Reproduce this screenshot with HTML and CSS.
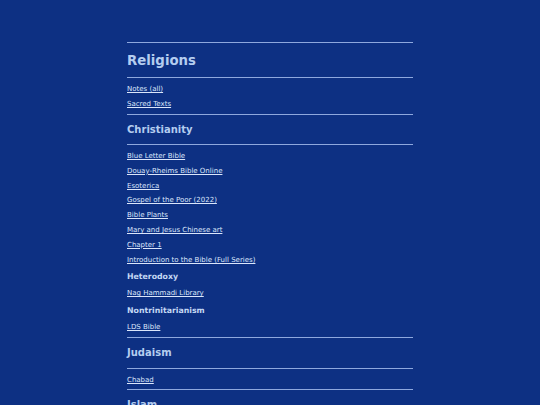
FILE: index.html
```html
<!DOCTYPE html>
<html>
<head>
<meta charset="utf-8">
<link rel="stylesheet" href="styles.css">
</head>
<body>
<main class="page">
  <hr class="rule">
  <h1 class="h1">Religions</h1>
  <hr class="rule">
  <ul class="links">
    <li><a href="#">Notes (all)</a></li>
    <li><a href="#">Sacred Texts</a></li>
  </ul>
  <hr class="rule">
  <h2 class="h2">Christianity</h2>
  <hr class="rule">
  <ul class="links">
    <li><a href="#">Blue Letter Bible</a></li>
    <li><a href="#">Douay-Rheims Bible Online</a></li>
    <li><a href="#">Esoterica</a></li>
    <li><a href="#">Gospel of the Poor (2022)</a></li>
    <li><a href="#">Bible Plants</a></li>
    <li><a href="#">Mary and Jesus Chinese art</a></li>
    <li><a href="#">Chapter 1</a></li>
    <li><a href="#">Introduction to the Bible (Full Series)</a></li>
  </ul>
  <h3 class="h3">Heterodoxy</h3>
  <ul class="links">
    <li><a href="#">Nag Hammadi Library</a></li>
  </ul>
  <h3 class="h3">Nontrinitarianism</h3>
  <ul class="links">
    <li><a href="#">LDS Bible</a></li>
  </ul>
  <hr class="rule">
  <h2 class="h2">Judaism</h2>
  <hr class="rule">
  <ul class="links">
    <li><a href="#">Chabad</a></li>
  </ul>
  <hr class="rule">
  <h2 class="h2">Islam</h2>
</main>
</body>
</html>
```
FILE: styles.css
```css
html, body {
  margin: 0;
  padding: 0;
  background: #0d3083;
}
body {
  font-family: "DejaVu Sans", Verdana, sans-serif;
  color: #b4cdf0;
}
.page {
  width: 286px;
  margin: 0 auto;
  padding-top: 42px;
}
.rule {
  border: 0;
  border-top: 1px solid #8ea8de;
  margin: 0;
  height: 0;
}
.h1 {
  font-size: 13.3px;
  font-weight: bold;
  margin: 0;
  padding: 10px 0 8px;
  line-height: 16px;
  color: #b4cdf0;
}
.h2 {
  font-size: 10px;
  font-weight: bold;
  margin: 0;
  padding: 8px 0 8.5px;
  line-height: 13px;
  color: #b4cdf0;
}
.h3 {
  font-size: 7.8px;
  font-weight: bold;
  margin: 0;
  padding: 3px 0 0;
  line-height: 10px;
  color: #c4d8f4;
}
.links {
  list-style: none;
  margin: 0;
  padding: 4px 0 2px;
}
.links li {
  font-size: 7px;
  line-height: 14.8px;
}
.links a {
  color: #dbe6fb;
  text-decoration: underline;
}
```
